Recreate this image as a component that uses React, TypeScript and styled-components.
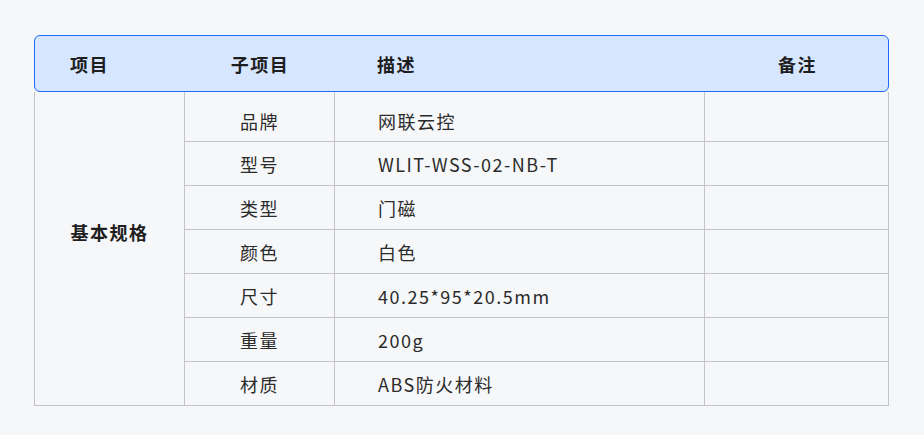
import React from "react";
import styled, { createGlobalStyle } from "styled-components";

const GlobalStyle = createGlobalStyle`
  html, body {
    margin: 0;
    padding: 0;
    background: #f6f7f9;
    font-family: "Noto Sans CJK SC", "Noto Sans", sans-serif;
  }
`;

const Page = styled.div`
  padding: 35px 0 0 34px;
  width: 924px;
  height: 435px;
  box-sizing: border-box;
`;

const Table = styled.div`
  width: 855px;
  display: flex;
  flex-direction: column;
`;

const Header = styled.div`
  display: grid;
  grid-template-columns: 150px 150px 370px 185px;
  height: 57px;
  box-sizing: border-box;
  border: 1px solid #1f69ff;
  border-radius: 6px;
  background: #d7e6ff;
`;

type Align = "left" | "center";

const HeadCell = styled.div<{ $align: Align; $pad?: number }>`
  display: flex;
  align-items: center;
  justify-content: ${(p) => (p.$align === "center" ? "center" : "flex-start")};
  padding-left: ${(p) => p.$pad ?? 0}px;
  font-size: 18px;
  font-weight: 700;
  letter-spacing: 1.5px;
  color: #1e1e1e;
`;

const Body = styled.div`
  display: grid;
  grid-template-columns: 150px 150px 370px 184px;
  grid-template-rows: 50px repeat(6, 44px);
  border-left: 1px solid #c4c4c6;
`;

const Cell = styled.div<{
  $align: Align;
  $pad?: number;
  $bold?: boolean;
  $span?: number;
  $first?: boolean;
}>`
  box-sizing: border-box;
  display: flex;
  align-items: center;
  justify-content: ${(p) => (p.$align === "center" ? "center" : "flex-start")};
  padding-left: ${(p) => p.$pad ?? 0}px;
  padding-top: ${(p) => (p.$first ? 8 : 0)}px;
  padding-bottom: ${(p) => (p.$bold ? 34 : 0)}px;
  border-right: 1px solid #c4c4c6;
  border-bottom: 1px solid #c4c4c6;
  font-size: 18px;
  letter-spacing: 1.5px;
  font-weight: ${(p) => (p.$bold ? 700 : 400)};
  color: ${(p) => (p.$bold ? "#1e1e1e" : "#2b2b2b")};
  ${(p) => (p.$span ? `grid-row: span ${p.$span};` : "")}
`;

const rows: [string, string][] = [
  ["品牌", "网联云控"],
  ["型号", "WLIT-WSS-02-NB-T"],
  ["类型", "门磁"],
  ["颜色", "白色"],
  ["尺寸", "40.25*95*20.5mm"],
  ["重量", "200g"],
  ["材质", "ABS防火材料"],
];

export default function App() {
  return (
    <Page>
      <GlobalStyle />
      <Table>
        <Header>
          <HeadCell $align="left" $pad={35}>项目</HeadCell>
          <HeadCell $align="center">子项目</HeadCell>
          <HeadCell $align="left" $pad={42}>描述</HeadCell>
          <HeadCell $align="center">备注</HeadCell>
        </Header>
        <Body>
          <Cell $align="center" $bold $span={7}>基本规格</Cell>
          {rows.map(([k, v], i) => (
            <React.Fragment key={k}>
              <Cell $align="center" $first={i === 0} style={{ gridColumn: 2, gridRow: i + 1 }}>{k}</Cell>
              <Cell $align="left" $pad={43} $first={i === 0} style={{ gridColumn: 3, gridRow: i + 1 }}>{v}</Cell>
              <Cell $align="left" style={{ gridColumn: 4, gridRow: i + 1 }} />
            </React.Fragment>
          ))}
        </Body>
      </Table>
    </Page>
  );
}
